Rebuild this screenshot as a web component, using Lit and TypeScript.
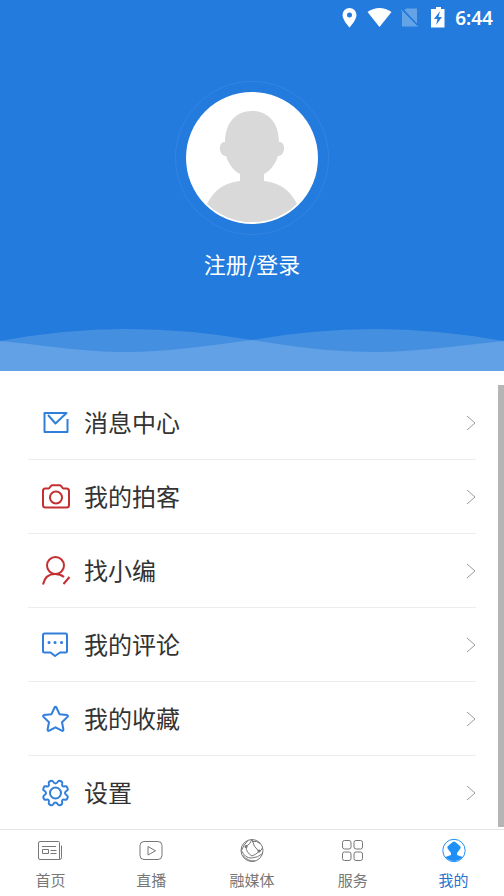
import { LitElement, html, css, svg } from "lit";
import { customElement, property } from "lit/decorators.js";

const menuIcons = {
  mail: svg`<path d="M24 6H4.500V25H27.500V12M8 8L15.500 16.500L26.500 6H23"/>`,
  camera: svg`<path d="M5 7.500h4l2-2.600q.5-.6 1.300-.6h7.400q.8 0 1.300.6L23 7.500h3.500q2.500 0 2.500 2.500v14q0 2.500-2.500 2.500H5.500q-2.500 0-2.500-2.500v-14Q3 7.500 5 7.500z"/><circle cx="16" cy="16.500" r="6"/>`,
  editor: svg`<circle cx="15.500" cy="10.500" r="8.500"/><path d="M3 29.500C4.500 22 9 19 15 19Q20.500 19 24 22M23.500 29L29.500 22"/>`,
  comment: svg`<path d="M4.500 4.500h21q1.500 0 1.500 1.500v16q0 1.500-1.500 1.500H20L15 27L10.500 23.500H4.500Q3 23.500 3 22V6q0-1.500 1.500-1.500z"/><path class="dots" d="M9 13.500h.1M15 13.500h.1M21.500 13.500h.1"/>`,
  star: svg`<path d="M14.600 4.500q.9-1.700 1.800 0l3.100 6.700 7.500.9q1.600.5.500 1.800l-5.500 5.300 1.400 7.300q0 1.900-1.600 1.200l-6.300-3.400-6.300 3.400q-1.600.7-1.600-1.200l1.400-7.300L3.500 13.900q-1.100-1.300.5-1.800l7.500-.9z"/>`,
  gear: svg`<circle cx="15.500" cy="16" r="5.500"/><path d="M13 4.500Q15.500 8.500 18 4.500Q19 3.200 20.500 4L21.500 4.500Q22.500 5 22.200 6.500Q21.300 10.200 25 9.300Q26.500 9 27 10L27.500 11Q28.300 12.500 27 13.500Q23 16 27 18.500Q28.300 19.500 27.500 21L27 22Q26.500 23 25 22.700Q21.300 21.800 22.200 25.500Q22.500 27 21.500 27.500L20.500 28Q19 28.800 18 27.500Q15.500 23.500 13 27.500Q12 28.800 10.500 28L9.500 27.500Q8.500 27 8.800 25.500Q9.700 21.800 6 22.700Q4.500 23 4 22L3.500 21Q2.700 19.500 4 18.500Q8 16 4 13.500Q2.700 12.500 3.500 11L4 10Q4.500 9 6 9.300Q9.700 10.200 8.800 6.500Q8.500 5 9.500 4.500L10.500 4Q12 3.200 13 4.500z"/>`,
};

const tabIcons = {
  home: svg`<path d="M4 3.500h18.500q1 0 1 1v17H4q-1.500 0-1.500-1.500V5Q2.500 3.500 4 3.500zM23.500 21.500q2 0 2-2V7.500M6 8.500h14M14.500 12.500h6M14.500 15.500h6M6.500 11.500h6v4h-6z"/>`,
  live: svg`<rect x="3" y="3.500" width="22" height="18" rx="4"/><path d="M11 8.500v8.500l7.500-4.200z"/>`,
  media: svg`<circle cx="14" cy="12.500" r="11"/><path d="M10 2.500Q5 7.500 3.500 12.500Q7 20.500 14 20Q20 19.500 24.500 15.500M8 8.500Q12 6.500 14 1.500Q15 8.500 21 13.500Q24 12.500 24.500 9.500M8 8.500Q8 14.500 14 18Q18 16.500 21 13.500M14 3.500Q19 2.500 22 5.500M5 17.500Q10 23.500 17 23"/><path class="nodes" d="M8 8.500h.1M21 13h.1"/>`,
  service: svg`<rect x="3.500" y="2.500" width="8.500" height="8.500" rx="2"/><rect x="15" y="2.500" width="8.500" height="8.500" rx="2"/><rect x="3.500" y="14" width="8.500" height="8.500" rx="2"/><rect x="15" y="14" width="8.500" height="8.500" rx="2"/>`,
  mine: svg`<circle cx="14" cy="12.500" r="11.200"/><path class="solid" d="M14 3.500Q15 3.500 16.500 5L20 8Q21.300 9.500 20 11L17 15V17Q20 18 22.500 19A11 11 0 0 1 5.500 19Q8 18 11 17V15L8 11Q6.700 9.500 8 8L11.500 5Q13 3.500 14 3.500z"/>`,
};

@customElement("status-bar")
class StatusBar extends LitElement {
  static styles = css`
    :host { display: flex; justify-content: flex-end; height: 36px; padding-right: 11px; }
    svg { width: 112px; height: 36px; }
    .faded { opacity: 0.3; }
    .cut { stroke: #227bdd; stroke-width: 2; }
    .slash { stroke: #fff; stroke-width: 1; }
    .time { font: 600 19px/36px "Noto Sans", sans-serif; margin-left: 8px; }
  `;
  render() {
    return html`
      <svg viewBox="0 0 112 36" fill="#fff" aria-hidden="true">
        <path fill-rule="evenodd" d="M14.500 8a7 7 0 0 1 7 7c0 5-7 12.500-7 12.500S7.500 20 7.500 15a7 7 0 0 1 7-7zm0 4.500a2.500 2.500 0 1 0 0 5 2.500 2.500 0 0 0 0-5z"/>
        <path d="M32.500 12Q44.500 4 56.500 12L44.500 27z"/>
        <g class="faded"><path d="M71 8.500h11v18H67V12.500z"/><path class="cut" d="M67 9L83 26"/><path class="slash" d="M66 10L83 27"/></g>
        <path d="M101 7h5v2h3.500v18.500H96V9h5z"/>
        <path fill="#227bdd" d="M105 11L99 19h3.500l-1.500 6 6-8h-3.500z"/>
      </svg>
      <span class="time">6:44</span>
    `;
  }
}

@customElement("profile-header")
class ProfileHeader extends LitElement {
  static styles = css`
    :host { display: flex; flex-direction: column; background: #227bdd; color: #fff; }
    .login {
      display: flex; flex-direction: column; align-items: center; align-self: center;
      margin: 44px 0 0; padding: 0; border: 0; background: none; color: inherit;
      font: 22px/30px "Noto Sans CJK SC", sans-serif; gap: 12px;
    }
    .avatar { width: 156px; height: 156px; }
    .ring { fill: none; stroke: #3585e0; }
    .wave { display: block; width: 100%; height: 43px; margin-top: 50px; }
  `;
  render() {
    return html`
      <status-bar></status-bar>
      <button class="login">
        <svg class="avatar" viewBox="0 0 156 156" aria-hidden="true">
          <circle class="ring" cx="78" cy="78" r="76.500"/>
          <circle cx="78" cy="78" r="66" fill="#fff"/>
          <path fill="#d9d9d9" d="M78 31C95 31 105 44 105 62C112 61 112 76 104 76C101 85 96 91 90 94V101C108 103 117 112 123 124A65 65 0 0 1 33 124C39 112 48 103 66 101V94C60 91 55 85 52 76C44 76 44 61 51 62C51 44 61 31 78 31z"/>
        </svg>
        <span>注册/登录</span>
      </button>
      <svg class="wave" viewBox="0 0 504 43" preserveAspectRatio="none" aria-hidden="true">
        <path fill="#458fe1" d="M0 13Q64 1 126 1T252 12Q314 1 375 1T504 13V43H0z"/>
        <path fill="#62a1e5" d="M0 13C50 18 85 24 126 24S205 18 252 12C300 20 335 24 375 24S455 18 504 13V43H0z"/>
      </svg>
    `;
  }
}

@customElement("menu-row")
class MenuRow extends LitElement {
  @property() icon: keyof typeof menuIcons = "mail";
  @property() label = "";
  @property() tone = "blue";
  static styles = css`
    :host { display: block; border-bottom: 1px solid #ececec; }
    :host(:last-of-type) { border-bottom: 0; }
    button {
      display: flex; align-items: center; width: 100%; height: 73px; padding: 0 0 0 12px;
      border: 0; background: none; color: #333; text-align: left;
      font: 24px/36px "Noto Sans CJK SC", sans-serif;
    }
    .icon { width: 32px; height: 32px; margin-right: 12px; fill: none; stroke-width: 2; stroke-linejoin: round; }
    .blue { stroke: #317fda; }
    .red { stroke: #c32f32; }
    .dots { stroke-width: 3; stroke-linecap: round; }
    .label { flex: 1; padding-bottom: 2px; }
    .arrow { width: 10px; height: 18px; fill: none; stroke: #999; }
  `;
  render() {
    return html`<button>
      <svg class="icon ${this.tone}" viewBox="0 0 32 32" aria-hidden="true">${menuIcons[this.icon]}</svg>
      <span class="label">${this.label}</span>
      <svg class="arrow" viewBox="0 0 10 18" aria-hidden="true"><path d="M1 2L9 9L1 16"/></svg>
    </button>`;
  }
}

@customElement("tab-bar")
class TabBar extends LitElement {
  static styles = css`
    :host { display: grid; grid-template-columns: repeat(5, 1fr); border-top: 1px solid #e5e5e5; background: #fff; }
    a {
      display: flex; flex-direction: column; align-items: center; gap: 4px; padding: 8px 0 4px;
      color: #777; text-decoration: none; font: 15px/24px "Noto Sans CJK SC", sans-serif;
    }
    svg { width: 28px; height: 26px; fill: none; stroke: currentColor; stroke-linejoin: round; }
    .active { color: #2473d1; }
    .active svg { color: #1f8ff8; }
    .solid { fill: currentColor; stroke: none; }
    .nodes { stroke-width: 3; stroke-linecap: round; }
  `;
  render() {
    const tabs: [keyof typeof tabIcons, string][] = [
      ["home", "首页"], ["live", "直播"], ["media", "融媒体"], ["service", "服务"], ["mine", "我的"],
    ];
    return tabs.map(([icon, label]) => html`
      <a href="#${icon}" class=${icon === "mine" ? "active" : ""}>
        <svg viewBox="0 0 28 26" aria-hidden="true">${tabIcons[icon]}</svg>
        <span>${label}</span>
      </a>`);
  }
}

@customElement("app-root")
class AppRoot extends LitElement {
  static styles = css`
    :host { display: flex; flex-direction: column; min-height: 100vh; background: #fff; }
    main { display: flex; flex: 1; padding-top: 14px; }
    .list { flex: 1; padding: 1px 22px 0 28px; }
    .scroll { width: 6px; margin-bottom: 2px; background: #b5b5b5; }
  `;
  render() {
    return html`
      <profile-header></profile-header>
      <main>
        <div class="list">
          <menu-row icon="mail" label="消息中心"></menu-row>
          <menu-row icon="camera" tone="red" label="我的拍客"></menu-row>
          <menu-row icon="editor" tone="red" label="找小编"></menu-row>
          <menu-row icon="comment" label="我的评论"></menu-row>
          <menu-row icon="star" label="我的收藏"></menu-row>
          <menu-row icon="gear" label="设置"></menu-row>
        </div>
        <div class="scroll"></div>
      </main>
      <tab-bar></tab-bar>
    `;
  }
}
